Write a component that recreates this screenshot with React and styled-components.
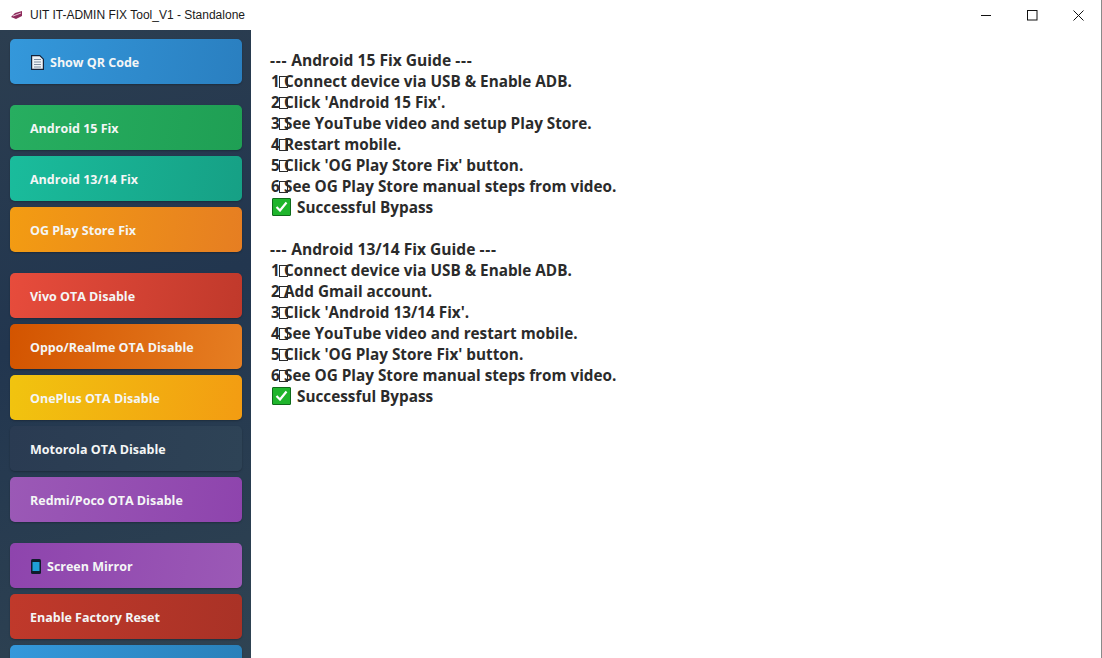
import React from "react";
import styled, { createGlobalStyle } from "styled-components";

const GlobalStyle = createGlobalStyle`
  html, body {
    margin: 0;
    height: 100%;
    overflow: hidden;
    background: #ffffff;
  }
`;

const Window = styled.div`
  display: flex;
  flex-direction: column;
  width: 1102px;
  height: 658px;
  overflow: hidden;
  box-sizing: border-box;
  border-right: 1px solid #8a8a8a;
  font-family: "Open Sans", "Noto Sans", sans-serif;
`;

const TitleBar = styled.div`
  display: flex;
  align-items: center;
  flex: 0 0 30px;
  height: 30px;
  padding-left: 10px;
  background: #ffffff;
`;

const AppTitle = styled.span`
  margin-left: 7px;
  font-family: "Liberation Sans", sans-serif;
  font-size: 12px;
  color: #1a1a1a;
`;

const WindowControls = styled.div`
  display: flex;
  margin-left: auto;
`;

const ControlButton = styled.div`
  display: flex;
  align-items: center;
  justify-content: center;
  width: 46px;
  height: 30px;
`;

const Body = styled.div`
  display: flex;
  flex: 1;
  min-height: 0;
`;

const Sidebar = styled.div`
  display: flex;
  flex-direction: column;
  flex: 0 0 251px;
  box-sizing: border-box;
  padding: 9px 9px 0 10px;
  background: linear-gradient(160deg, #2c3e50 0%, #22364f 45%, #2f4352 100%);
`;

const Group = styled.div`
  display: flex;
  flex-direction: column;
  flex-shrink: 0;
  row-gap: 6px;
  margin-bottom: 21px;
`;

const SideButton = styled.div`
  display: flex;
  align-items: center;
  column-gap: 6px;
  flex-shrink: 0;
  box-sizing: border-box;
  height: 45px;
  padding: 2px 0 0 ${(p) => (p.$icon ? 21 : 20)}px;
  border-radius: 5px;
  background: linear-gradient(100deg, ${(p) => p.$from}, ${(p) => p.$to});
  box-shadow: 0 1px 2px rgba(0, 0, 0, 0.25);
  color: #f4f6f6;
  font-size: 12.5px;
  font-weight: 700;
  white-space: nowrap;
`;

const Content = styled.div`
  flex: 1;
  padding: 19px 0 0 19px;
  background: #ffffff;
`;

const GuideBlock = styled.div`
  margin-bottom: 21px;
`;

const GuideLine = styled.div`
  display: flex;
  align-items: center;
  height: 21px;
  color: #2b2b2b;
  font-size: ${(p) => (p.$title ? 15.6 : 15.3)}px;
  font-weight: 700;
  white-space: pre;
`;

const Dashes = styled.span`
  letter-spacing: 0.7px;
`;

const Keycap = styled.span`
  position: relative;
  flex: 0 0 13px;
  width: 13px;
  margin-left: 1px;
  &::after {
    content: "";
    position: absolute;
    left: 8px;
    top: 5px;
    width: 7px;
    height: 10px;
    border: 1px solid #2b2b2b;
  }
`;

const CheckBox = styled.span`
  display: flex;
  align-items: center;
  justify-content: center;
  width: 19px;
  height: 18px;
  margin: 0 6px 0 2px;
  box-sizing: border-box;
  border: 1px solid #0f6b1a;
  border-radius: 1px;
  background: #1fb52c;
`;

const buttons = [
  [
    { label: "Show QR Code", from: "#3498db", to: "#2a7fc0", icon: "doc" },
  ],
  [
    { label: "Android 15 Fix", from: "#27ae60", to: "#1f9f54" },
    { label: "Android 13/14 Fix", from: "#1abc9c", to: "#16a085" },
    { label: "OG Play Store Fix", from: "#f39c12", to: "#e67e22" },
  ],
  [
    { label: "Vivo OTA Disable", from: "#e74c3c", to: "#c0392b" },
    { label: "Oppo/Realme OTA Disable", from: "#d35400", to: "#e67e22" },
    { label: "OnePlus OTA Disable", from: "#f1c40f", to: "#f39c12" },
    { label: "Motorola OTA Disable", from: "#2a3b52", to: "#2e4356" },
    { label: "Redmi/Poco OTA Disable", from: "#9b59b6", to: "#8e44ad" },
  ],
  [
    { label: "Screen Mirror", from: "#8e44ad", to: "#9b59b6", icon: "phone" },
    { label: "Enable Factory Reset", from: "#c0392b", to: "#a93226" },
    { label: "", from: "#3498db", to: "#2980b9" },
  ],
];

const guides = [
  {
    title: "Android 15 Fix Guide",
    steps: [
      "Connect device via USB & Enable ADB.",
      "Click 'Android 15 Fix'.",
      "See YouTube video and setup Play Store.",
      "Restart mobile.",
      "Click 'OG Play Store Fix' button.",
      "See OG Play Store manual steps from video.",
    ],
  },
  {
    title: "Android 13/14 Fix Guide",
    steps: [
      "Connect device via USB & Enable ADB.",
      "Add Gmail account.",
      "Click 'Android 13/14 Fix'.",
      "See YouTube video and restart mobile.",
      "Click 'OG Play Store Fix' button.",
      "See OG Play Store manual steps from video.",
    ],
  },
];

function AppIcon() {
  return (
    <svg width="13" height="10" viewBox="0 0 13 10">
      <path d="M1 7 L5 3 L12 1 L12 6 L6 9 Z" fill="#8e2a5c" />
      <path d="M3 6 L11 3" stroke="#e8c8d8" strokeWidth="1" />
    </svg>
  );
}

function DocIcon() {
  return (
    <svg width="13" height="15" viewBox="0 0 13 15">
      <path d="M0.6 0.6 H8.8 L12.4 4.2 V14.4 H0.6 Z" fill="#eef2f6" stroke="#14233a" strokeWidth="1.2" />
      <path d="M3 4.5 H10 M3 7 H10 M3 9.5 H10 M3 12 H10" stroke="#7d8da0" strokeWidth="1" />
    </svg>
  );
}

function PhoneIcon() {
  return (
    <svg width="10" height="15" viewBox="0 0 10 15">
      <rect x="0" y="0" width="10" height="15" rx="1.5" fill="#111c2c" />
      <rect x="1.5" y="3" width="7" height="9" fill="#1f9fd8" />
    </svg>
  );
}

function CheckIcon() {
  return (
    <svg width="13" height="11" viewBox="0 0 13 11">
      <path d="M1.5 6 L5 9.5 L11.5 1.5" fill="none" stroke="#ffffff" strokeWidth="2.2" />
    </svg>
  );
}

export default function App() {
  return (
    <Window>
      <GlobalStyle />
      <TitleBar>
        <AppIcon />
        <AppTitle>UIT IT-ADMIN FIX Tool_V1 - Standalone</AppTitle>
        <WindowControls>
          <ControlButton>
            <svg width="11" height="11" viewBox="0 0 11 11">
              <path d="M0 5.5 H10" stroke="#111" fill="none" />
            </svg>
          </ControlButton>
          <ControlButton>
            <svg width="11" height="11" viewBox="0 0 11 11">
              <rect x="0.5" y="0.5" width="9.5" height="9.5" stroke="#111" fill="none" />
            </svg>
          </ControlButton>
          <ControlButton>
            <svg width="11" height="11" viewBox="0 0 11 11">
              <path d="M0.5 0.5 L10.5 10.5 M10.5 0.5 L0.5 10.5" stroke="#111" fill="none" />
            </svg>
          </ControlButton>
        </WindowControls>
      </TitleBar>
      <Body>
        <Sidebar>
          {buttons.map((group, i) => (
            <Group key={i}>
              {group.map((b, j) => (
                <SideButton key={j} $from={b.from} $to={b.to} $icon={!!b.icon}>
                  {b.icon === "doc" && <DocIcon />}
                  {b.icon === "phone" && <PhoneIcon />}
                  {b.label}
                </SideButton>
              ))}
            </Group>
          ))}
        </Sidebar>
        <Content>
          {guides.map((g) => (
            <GuideBlock key={g.title}>
              <GuideLine $title>
                <span>
                  <Dashes>---</Dashes> {g.title} <Dashes>---</Dashes>
                </span>
              </GuideLine>
              {g.steps.map((s, i) => (
                <GuideLine key={s}>
                  <Keycap>{i + 1}</Keycap>
                  {s}
                </GuideLine>
              ))}
              <GuideLine>
                <CheckBox>
                  <CheckIcon />
                </CheckBox>
                Successful Bypass
              </GuideLine>
            </GuideBlock>
          ))}
        </Content>
      </Body>
    </Window>
  );
}
